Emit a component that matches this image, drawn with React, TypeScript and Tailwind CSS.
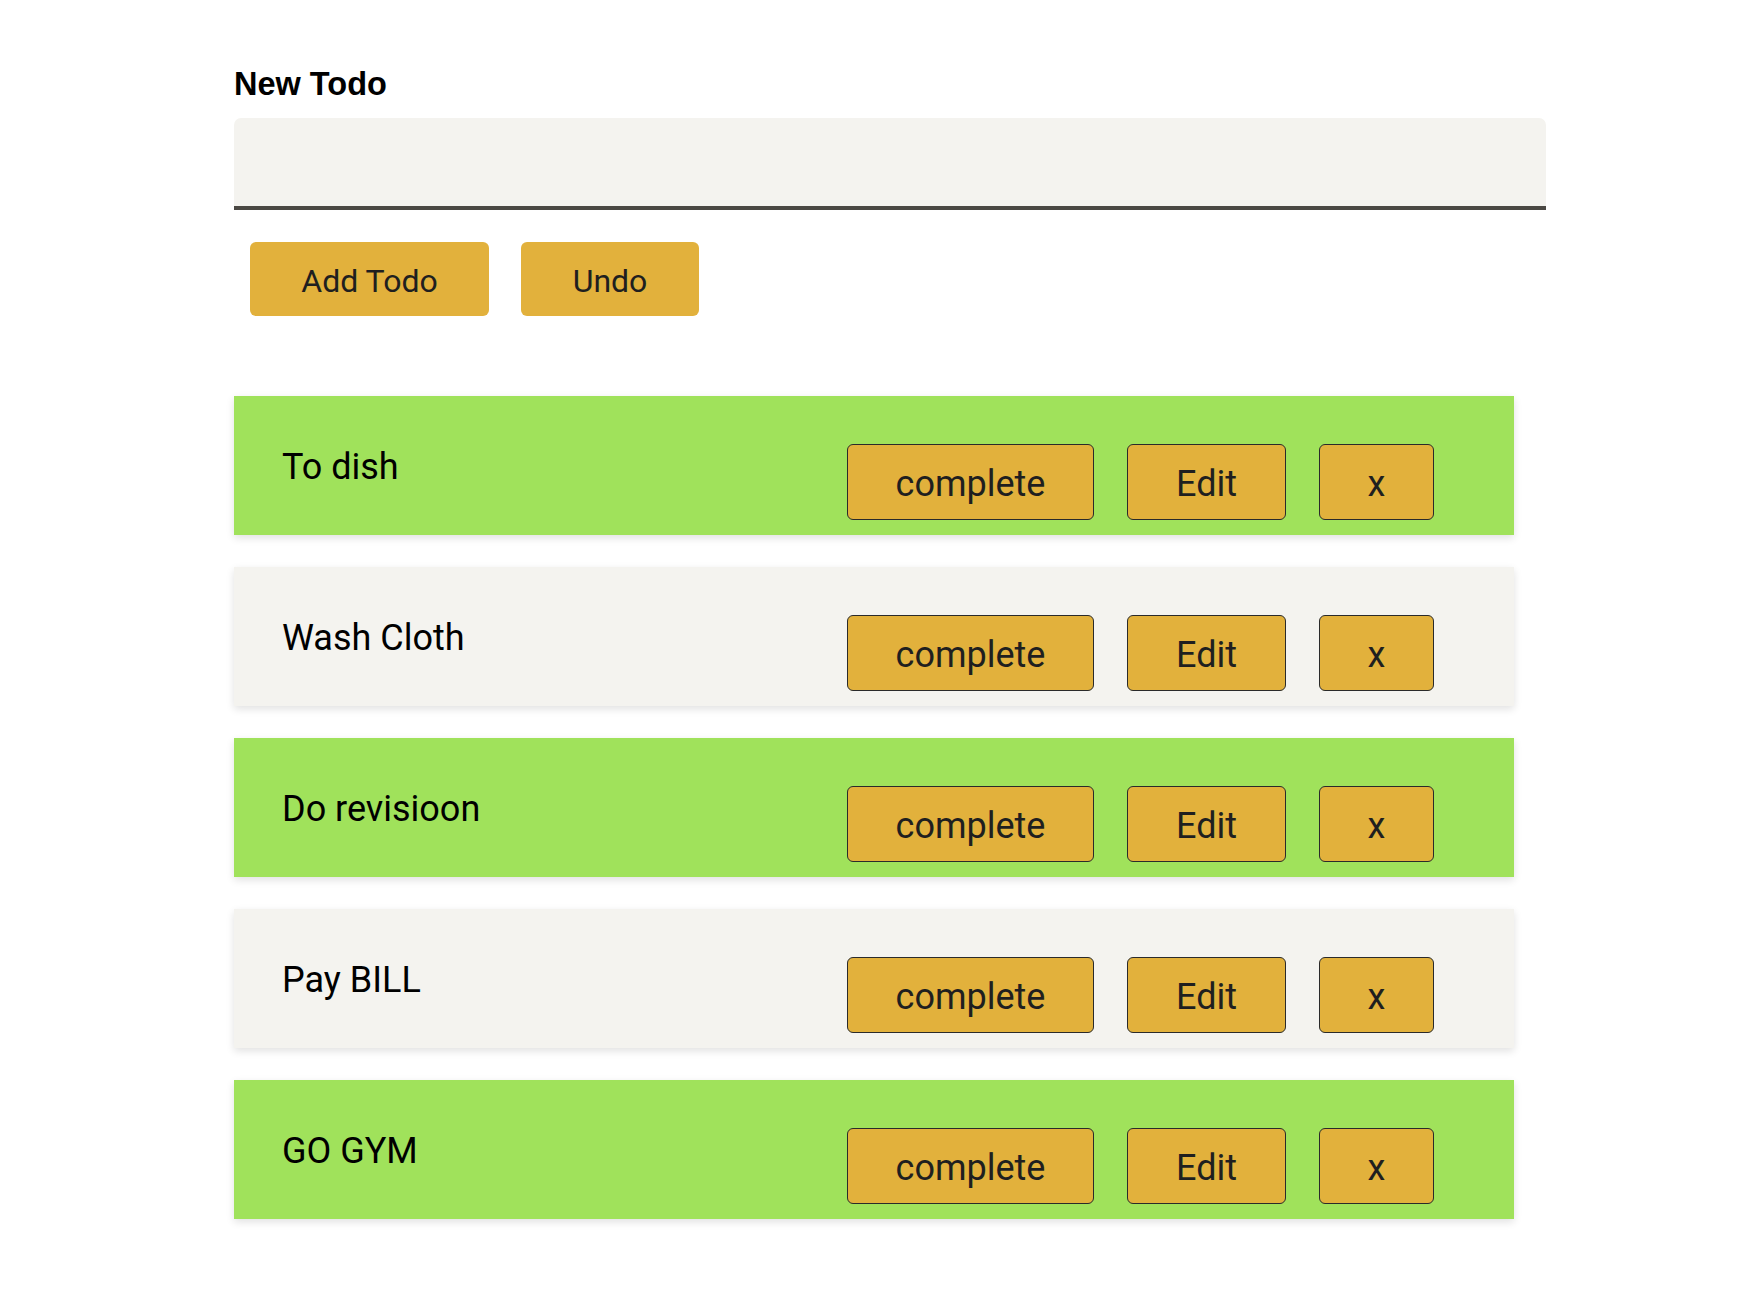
const todos = [
  { id: 1, text: "To dish", done: true },
  { id: 2, text: "Wash Cloth", done: false },
  { id: 3, text: "Do revisioon", done: true },
  { id: 4, text: "Pay BILL", done: false },
  { id: 5, text: "GO GYM", done: true },
];

const itemBtn =
  "h-[76px] rounded-[6px] border border-[#2a2a2a] bg-[#e2b13c] pt-[4px] text-[36px] text-[#1f1f1f] leading-none";

const App = () => {
  return (
    <div className="min-h-screen bg-white font-['Roboto',sans-serif]">
      <div className="ml-[234px] w-[1312px] pt-[66px] pb-20">
        {/* New todo form */}
        <label className="block font-['Liberation_Sans',Arial,sans-serif] text-[32.5px] font-bold leading-[37px] text-black">
          New Todo
        </label>
        <input
          type="text"
          className="mt-[15px] block h-[92px] w-full rounded-t-[7px] border-b-4 border-[#4a4843] bg-[#f4f3ef] px-4 text-[32px] outline-none"
        />
        <div className="mt-8 flex gap-8 pl-4">
          <button className="h-[74px] w-[239px] rounded-[6px] bg-[#e2b13c] pt-[4px] text-[32px] text-[#1f1f1f]">
            Add Todo
          </button>
          <button className="h-[74px] w-[178px] rounded-[6px] bg-[#e2b13c] pt-[4px] text-[32px] text-[#1f1f1f]">
            Undo
          </button>
        </div>

        {/* Todo list */}
        <ul className="mt-20 flex w-[1280px] flex-col gap-8">
          {todos.map((todo) => (
            <li
              key={todo.id}
              className={`flex h-[139px] items-start justify-between pt-12 pl-12 pr-20 shadow-[0_3px_8px_rgba(0,0,0,0.12)] ${
                todo.done ? "bg-[#a0e25b]" : "bg-[#f4f3ef]"
              }`}
            >
              <span className="mt-[2px] text-[36px] leading-[42px] text-black">
                {todo.text}
              </span>
              <div className="flex gap-[33px]">
                <button className={`${itemBtn} w-[247px]`}>complete</button>
                <button className={`${itemBtn} w-[159px]`}>Edit</button>
                <button className={`${itemBtn} w-[115px]`}>x</button>
              </div>
            </li>
          ))}
        </ul>
      </div>
    </div>
  );
};

export default App;
